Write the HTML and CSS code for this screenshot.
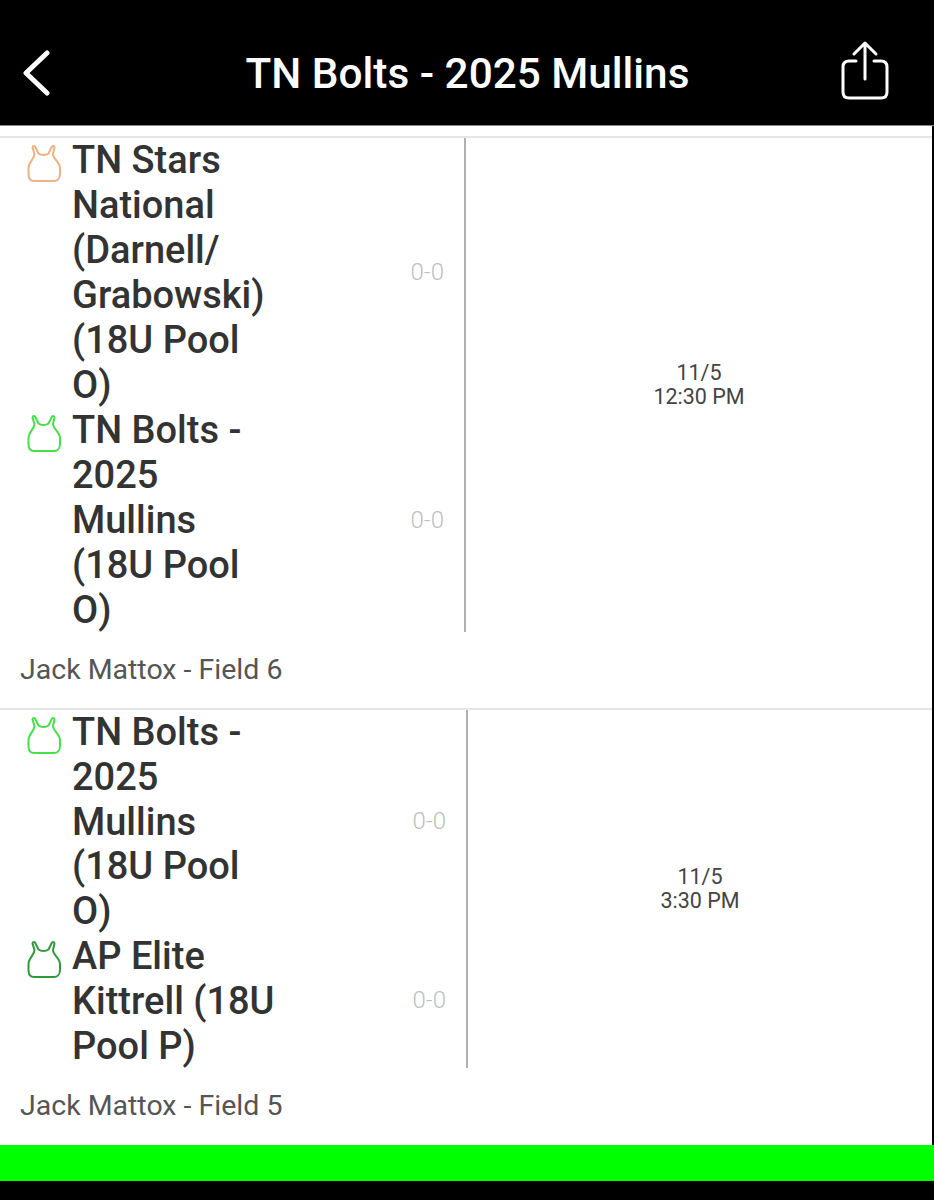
FILE: index.html
```html
<!DOCTYPE html>
<html lang="en">
<head>
    <meta charset="UTF-8">
    <title>TN Bolts - 2025 Mullins</title>
    <link rel="stylesheet" href="styles.css">
</head>
<body>
    <div class="page">
        <div class="topbar">
            <svg class="back-icon" viewBox="0 0 30 46"><path d="M25 3 L4 23 L25 43"/></svg>
            <h1>TN Bolts - 2025 Mullins</h1>
            <svg class="share-icon" viewBox="0 0 48 60"><path d="M24 38 V3 M13 13 L24 2 L35 13 M15 20 H8 Q2 20 2 26 V51 Q2 57 8 57 H40 Q46 57 46 51 V26 Q46 20 40 20 H33"/></svg>
        </div>

        <div class="schedule">
            <div class="game game-first">
                <div class="match">
                    <div class="teams">
                        <div class="team">
                            <svg class="jersey jersey-orange" viewBox="0 0 34 40"><path d="M5.5 2.5 C5.5 0.5 8 0.5 8.5 2.5 L11.5 8.5 C14 10.5 19 10.5 21.5 8.5 L24.5 2.5 C25 0.5 27.5 0.5 27.5 2.5 L26 9 C26 14 33 17 33 23 V29 C33 34 30 36 27 36 H7 C4 36 1.5 34 1.5 29 V23 C1.5 17 7.5 14 7.5 9 Z"/></svg>
                            <div class="team-name">TN Stars National (Darnell/ Grabowski) (18U Pool O)</div>
                            <div class="score">0-0</div>
                        </div>
                        <div class="team">
                            <svg class="jersey jersey-green" viewBox="0 0 34 40"><path d="M5.5 2.5 C5.5 0.5 8 0.5 8.5 2.5 L11.5 8.5 C14 10.5 19 10.5 21.5 8.5 L24.5 2.5 C25 0.5 27.5 0.5 27.5 2.5 L26 9 C26 14 33 17 33 23 V29 C33 34 30 36 27 36 H7 C4 36 1.5 34 1.5 29 V23 C1.5 17 7.5 14 7.5 9 Z"/></svg>
                            <div class="team-name">TN Bolts - 2025 Mullins (18U Pool O)</div>
                            <div class="score">0-0</div>
                        </div>
                    </div>
                    <div class="game-time">11/5<br>12:30 PM</div>
                </div>
                <div class="field">Jack Mattox - Field 6</div>
            </div>

            <div class="game game-second">
                <div class="match">
                    <div class="teams">
                        <div class="team">
                            <svg class="jersey jersey-green" viewBox="0 0 34 40"><path d="M5.5 2.5 C5.5 0.5 8 0.5 8.5 2.5 L11.5 8.5 C14 10.5 19 10.5 21.5 8.5 L24.5 2.5 C25 0.5 27.5 0.5 27.5 2.5 L26 9 C26 14 33 17 33 23 V29 C33 34 30 36 27 36 H7 C4 36 1.5 34 1.5 29 V23 C1.5 17 7.5 14 7.5 9 Z"/></svg>
                            <div class="team-name">TN Bolts - 2025 Mullins (18U Pool O)</div>
                            <div class="score">0-0</div>
                        </div>
                        <div class="team">
                            <svg class="jersey jersey-dark" viewBox="0 0 34 40"><path d="M5.5 2.5 C5.5 0.5 8 0.5 8.5 2.5 L11.5 8.5 C14 10.5 19 10.5 21.5 8.5 L24.5 2.5 C25 0.5 27.5 0.5 27.5 2.5 L26 9 C26 14 33 17 33 23 V29 C33 34 30 36 27 36 H7 C4 36 1.5 34 1.5 29 V23 C1.5 17 7.5 14 7.5 9 Z"/></svg>
                            <div class="team-name">AP Elite Kittrell (18U Pool P)</div>
                            <div class="score">0-0</div>
                        </div>
                    </div>
                    <div class="game-time">11/5<br>3:30 PM</div>
                </div>
                <div class="field">Jack Mattox - Field 5</div>
            </div>
        </div>

        <div class="green-bar"></div>
        <div class="bottom-bar"></div>
    </div>
</body>
</html>
```
FILE: styles.css
```css
body {
    margin: 0;
    padding: 0;
    background-color: #000;
    font-family: Roboto, "Liberation Sans", sans-serif;
}

.page {
    width: 934px;
    height: 1200px;
    display: flex;
    flex-direction: column;
    overflow: hidden;
}

.topbar {
    height: 126px;
    flex-shrink: 0;
    background-color: #000;
    border-bottom: 1px solid #888;
    box-sizing: border-box;
    display: flex;
    align-items: center;
    justify-content: space-between;
    padding: 20px 45px 0 22px;
}

.topbar h1 {
    margin: 2px 0 0 42px;
    color: #fff;
    font-size: 42.3px;
    font-weight: 500;
}

.back-icon {
    width: 30px;
    height: 46px;
    fill: none;
    stroke: #fff;
    stroke-width: 5;
    stroke-linecap: round;
    stroke-linejoin: round;
}

.share-icon {
    width: 48px;
    height: 60px;
    margin-top: -3px;
    fill: none;
    stroke: #fff;
    stroke-width: 3;
    stroke-linecap: round;
    stroke-linejoin: round;
}

.schedule {
    height: 1019px;
    flex-shrink: 0;
    box-sizing: border-box;
    background-color: #fff;
    border-right: 2px solid #000;
    padding-top: 10px;
}

.game {
    border-top: 2px solid #e6e6e6;
    box-sizing: border-box;
}

.game-first {
    height: 572px;
}

.game-second {
    height: 436px;
}

.match {
    display: flex;
}

.teams {
    flex-shrink: 0;
    box-sizing: border-box;
    border-right: 2px solid #b0b0b0;
}

.game-first .teams {
    width: 466px;
    height: 494px;
}

.game-second .teams {
    width: 468px;
}

.team {
    display: flex;
    align-items: center;
    position: relative;
}

.team-name {
    width: 210px;
    margin-left: 72px;
    color: #333;
    font-size: 38px;
    font-weight: 500;
    line-height: 44.8px;
}

.game-first .team-name {
    line-height: 45px;
}

.score {
    margin-left: auto;
    margin-right: 20px;
    padding-bottom: 2px;
    color: #c0c0c0;
    font-size: 24px;
    font-weight: 300;
}

/* jersey hangs in the left gutter of the row, by the first line */
.jersey {
    position: absolute;
    left: 27px;
    top: 7px;
    width: 34px;
    height: 40px;
    fill: none;
    stroke-width: 2;
}

.jersey-orange {
    stroke: #eeb085;
}

.jersey-green {
    stroke: #46e04a;
}

.jersey-dark {
    stroke: #2f9a3c;
}

.game-time {
    flex: 1;
    align-self: center;
    text-align: center;
    color: #444;
    font-size: 21.5px;
    line-height: 24px;
}

.field {
    padding: 22px 0 0 20px;
    color: #555;
    font-size: 28.5px;
    line-height: 32px;
}

.green-bar {
    height: 36px;
    flex-shrink: 0;
    background-color: #00ff00;
}

.bottom-bar {
    flex: 1;
    background-color: #000;
}
```
